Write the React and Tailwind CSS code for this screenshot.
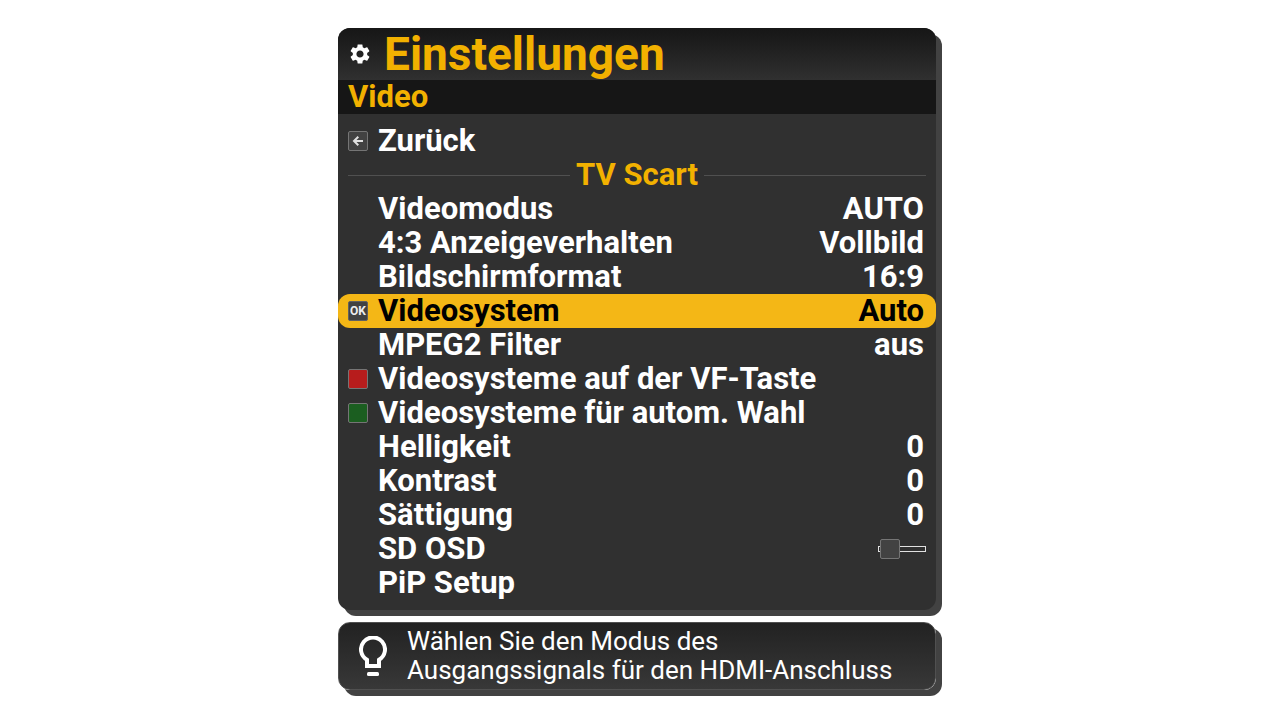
import React, { useState } from "react";

const entries = [
    { id: "mode", label: "Videomodus", value: "AUTO" },
    { id: "aspect", label: "4:3 Anzeigeverhalten", value: "Vollbild" },
    { id: "format", label: "Bildschirmformat", value: "16:9" },
    { id: "system", label: "Videosystem", value: "Auto" },
    { id: "mpeg2", label: "MPEG2 Filter", value: "aus" },
    { id: "vfkey", label: "Videosysteme auf der VF-Taste", color: "red" },
    { id: "autosel", label: "Videosysteme für autom. Wahl", color: "green" },
    { id: "brightness", label: "Helligkeit", value: "0" },
    { id: "contrast", label: "Kontrast", value: "0" },
    { id: "saturation", label: "Sättigung", value: "0" },
];

const GearIcon = () => (
    <svg viewBox="0 0 24 24" className="size-6 shrink-0 fill-white" aria-hidden="true">
        <path d="M19.14 12.94c.04-.3.06-.61.06-.94 0-.32-.02-.64-.07-.94l2.03-1.58c.18-.14.23-.41.12-.61l-1.92-3.32c-.12-.22-.37-.29-.59-.22l-2.39.96c-.5-.38-1.03-.7-1.62-.94l-.36-2.54c-.04-.24-.24-.41-.48-.41h-3.84c-.24 0-.43.17-.47.41l-.36 2.54c-.59.24-1.13.57-1.62.94l-2.39-.96c-.22-.08-.47 0-.59.22L2.74 8.87c-.12.21-.08.47.12.61l2.03 1.58c-.05.3-.09.63-.09.94s.02.64.07.94l-2.03 1.58c-.18.14-.23.41-.12.61l1.92 3.32c.12.22.37.29.59.22l2.39-.96c.5.38 1.03.7 1.62.94l.36 2.54c.05.24.24.41.48.41h3.84c.24 0 .44-.17.47-.41l.36-2.54c.59-.24 1.13-.56 1.62-.94l2.39.96c.22.08.47 0 .59-.22l1.92-3.32c.12-.22.07-.47-.12-.61l-2.01-1.58zM12 15.6c-1.98 0-3.6-1.62-3.6-3.6s1.62-3.6 3.6-3.6 3.6 1.62 3.6 3.6-1.62 3.6-3.6 3.6z" />
    </svg>
);

const BackKey = () => (
    <svg viewBox="0 0 20 20" className="size-5" aria-hidden="true">
        <rect x=".5" y=".5" width="19" height="19" rx="1.5" fill="#424242" stroke="#757575" />
        <path d="M15 10H6.5M10.3 5.7L6 10l4.3 4.3" fill="none" stroke="#e0e0e0" strokeWidth="2" />
    </svg>
);

// Key cap with a real text label
const OkKey = () => (
    <span className="flex size-5 items-center justify-center rounded-xs border border-[#616161] bg-[#424242] text-[12px] leading-none font-bold text-[#eeeeee]">OK</span>
);

const BulbIcon = () => (
    <svg viewBox="0 0 28 40" className="h-10 w-7 shrink-0" aria-hidden="true">
        <path d="M8 30v-6.2a12 12 0 1 1 12 0V30z" fill="none" stroke="#ffffff" strokeWidth="4" />
        <rect x="8" y="36" width="12" height="4" rx="1.5" fill="#ffffff" />
    </svg>
);

const Row = ({ entry, active, onSelect }) => (
    <button type="button" onClick={onSelect} className={`flex h-[34px] w-full items-center gap-2.5 rounded-xl pr-3 pl-2.5 text-left ${active ? "bg-[#f4b716] text-black" : "text-white"}`}>
        <span className="flex w-5 shrink-0">
            {active && <OkKey />}
            {!active && entry.color === "red" && <span className="size-5 rounded-xs border border-[#757575] bg-[#b71c1c]"></span>}
            {!active && entry.color === "green" && <span className="size-5 rounded-xs border border-[#757575] bg-[#1b5e20]"></span>}
        </span>
        <span className="grow">{entry.label}</span>
        <span>{entry.value}</span>
    </button>
);

const App = () => {
    const [selected, setSelected] = useState("system");
    const [sdOsd, setSdOsd] = useState(false);

    return (
        <div className="min-h-screen bg-white px-4 py-7 font-['Roboto',sans-serif]">
            <div className="mx-auto flex max-w-[604px] flex-col gap-3 pr-1.5">
                <main className="overflow-hidden rounded-xl bg-[#303030] text-[31px] leading-[34px] font-bold shadow-[6px_6px_0_#424242]">
                    <header className="flex h-13 items-center gap-3 bg-linear-to-b from-[#161616] to-[#303030] px-2.5 text-[#f2b100]">
                        <GearIcon />
                        <h1 className="text-[46px] leading-[52px]">Einstellungen</h1>
                    </header>
                    <h2 className="bg-[#161616] px-2.5 text-[#f2b100]">Video</h2>

                    <div className="py-2.5">
                        <button type="button" className="flex h-[34px] w-full items-center gap-2.5 px-2.5 text-left text-white">
                            <BackKey />
                            <span>Zurück</span>
                        </button>

                        {/* Section heading */}
                        <div className="flex h-[34px] items-center gap-1.5 px-2.5 text-[#f2b100]">
                            <span className="h-px grow bg-[#505050]"></span>
                            <h3>TV Scart</h3>
                            <span className="h-px grow bg-[#505050]"></span>
                        </div>

                        {entries.map((entry) => (
                            <Row key={entry.id} entry={entry} active={selected === entry.id} onSelect={() => setSelected(entry.id)} />
                        ))}

                        <div className="flex h-[34px] items-center justify-between pr-2.5 pl-10 text-white">
                            <label htmlFor="sd-osd">SD OSD</label>
                            <input id="sd-osd" type="checkbox" role="switch" checked={sdOsd} onChange={(e) => setSdOsd(e.target.checked)} className="relative h-1.5 w-12 appearance-none border border-[#e0e0e0] before:absolute before:-top-2 before:left-px before:size-5 before:rounded-xs before:border before:border-[#757575] before:bg-[#424242] checked:before:left-[25px]" />
                        </div>
                        <button type="button" className="flex h-[34px] w-full items-center pr-2.5 pl-10 text-left text-white">PiP Setup</button>
                    </div>
                </main>

                {/* Hint */}
                <aside className="flex h-[68px] items-center gap-5 rounded-xl border border-[#505050] bg-linear-to-b from-[#222222] to-[#383838] px-5 text-white shadow-[6px_6px_0_#424242]">
                    <BulbIcon />
                    <p className="text-[26px] leading-[29px]">
                        Wählen Sie den Modus des<br />
                        Ausgangssignals für den HDMI-Anschluss
                    </p>
                </aside>
            </div>
        </div>
    );
};

export default App;
